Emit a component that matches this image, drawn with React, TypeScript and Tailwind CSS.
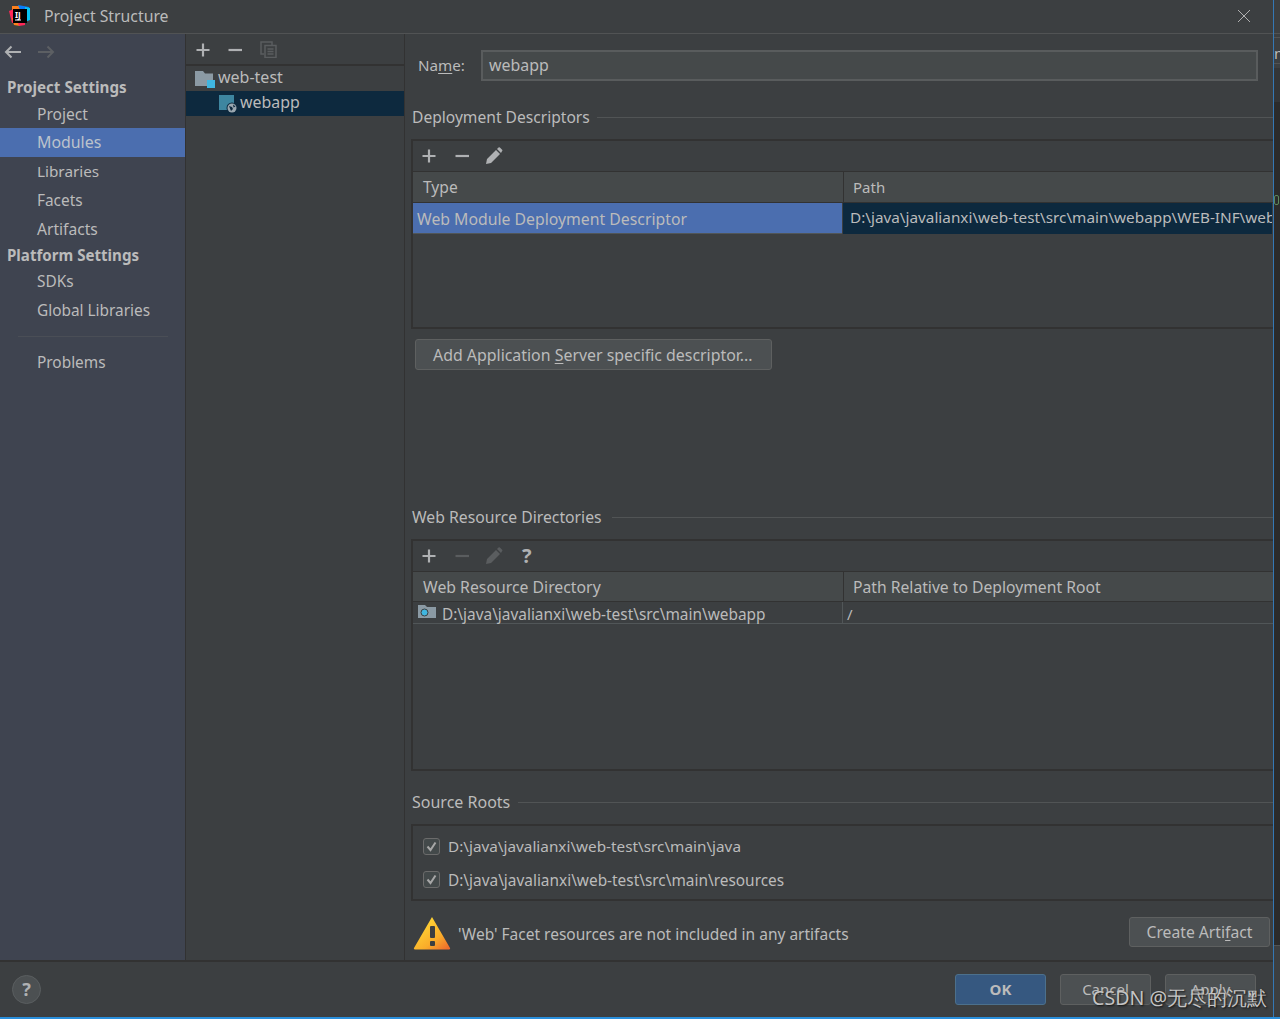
const navItems = [
  { label: 'Project Settings', top: 76, bold: true, size: 'text-[15.2px]' },
  { label: 'Project', top: 103, size: 'text-[15.6px]' },
  { label: 'Modules', top: 131, active: true, size: 'text-[15.9px]' },
  { label: 'Libraries', top: 160, size: 'text-[15.3px]' },
  { label: 'Facets', top: 190, size: 'text-[15.4px]' },
  { label: 'Artifacts', top: 218, size: 'text-[15.6px]' },
  { label: 'Platform Settings', top: 244, bold: true, size: 'text-[15.1px]' },
  { label: 'SDKs', top: 271, size: 'text-[15.4px]' },
  { label: 'Global Libraries', top: 300, size: 'text-[15.4px]' },
  { label: 'Problems', top: 352, size: 'text-[15.4px]' },
]

function Plus({ className = 'stroke-[#afb1b3]' }: { className?: string }) {
  return (
    <svg width="14" height="14" viewBox="0 0 14 14" className={className} fill="none" strokeWidth="2.200">
      <path d="M7 0.500v13M0.500 7h13" />
    </svg>
  )
}

function Minus({ className = 'stroke-[#afb1b3]' }: { className?: string }) {
  return (
    <svg width="14" height="14" viewBox="0 0 14 14" className={className} fill="none" strokeWidth="2.200">
      <path d="M0.500 7h13.500" />
    </svg>
  )
}

function Pencil({ className = 'fill-[#afb1b3]' }: { className?: string }) {
  return (
    <svg width="18" height="18" viewBox="0 0 18 18" className={className}>
      <path d="M1 17l1-5L11 3l4 4-9 9zM12 2l1.500-1.500a1 1 0 0 1 1.400 0l2.200 2.200a1 1 0 0 1 0 1.400L16 6z" />
    </svg>
  )
}

function Section({ title, top, lineFrom, size }: { title: string; top: number; lineFrom: number; size: string }) {
  return (
    <>
      <div className={`absolute left-[412px] leading-5 whitespace-nowrap ${size}`} style={{ top }}>{title}</div>
      <div className="absolute h-px right-[7px] bg-[#515455]" style={{ top: top + 10, left: lineFrom }} />
    </>
  )
}

function HeaderCell({ children, className }: { children: string; className: string }) {
  return <div className={`absolute top-0 h-full flex items-center whitespace-nowrap ${className}`}>{children}</div>
}

function Check({ top }: { top: number }) {
  return (
    <div className="absolute left-[423px] w-[17px] h-[17px] rounded-[3px] border border-[#6b6b6b] bg-[#43494a] flex items-center justify-center" style={{ top }}>
      <svg width="13" height="13" viewBox="0 0 13 13" fill="none" className="stroke-[#a7a7a7]" strokeWidth="2">
        <path d="M2.500 6.500l3 3.500 5-7.500" />
      </svg>
    </div>
  )
}

export default function App() {
  return (
    <div className="relative w-[1280px] h-[1019px] overflow-hidden bg-[#3c3f41] text-[#bbbbbb] font-['Noto_Sans','Open_Sans',sans-serif]">
      {/* title bar */}
      <div className="absolute inset-x-0 top-0 h-[34px] border-b border-[#515354]">
        <svg width="21" height="21" viewBox="0 0 21 21" className="absolute left-[9px] top-[5px]">
          <path d="M3 1l8 0 1 6-9 3z" fill="#fc801d" />
          <path d="M0 6l5-2 3 13-5 1z" fill="#fe2857" />
          <path d="M9 0l11 2 1 9-8-2z" fill="#087cfa" />
          <path d="M3 13l6 0 2 8-6-1z" fill="#fc801d" />
          <path d="M8 15l8 1 0 4-6 1z" fill="#fe2857" />
          <path d="M16 2l5 1 0 12-5 2z" fill="#07c3f2" />
          <rect x="4" y="4" width="14" height="14" fill="#000" />
          <rect x="6" y="14.500" width="6" height="1" fill="#fff" />
        </svg>
        <span className="absolute left-[15px] top-[10px] text-[8px] leading-[9px] font-bold text-white font-['Liberation_Sans',sans-serif]">IJ</span>
        <div className="absolute left-[44px] top-[6px] text-[15.8px] leading-5">Project Structure</div>
        <svg width="14" height="14" viewBox="0 0 14 14" className="absolute left-[1237px] top-[9px] stroke-[#b0b0b0]" fill="none" strokeWidth="1">
          <path d="M1 1l12 12M13 1L1 13" />
        </svg>
      </div>

      {/* sidebar */}
      <div className="absolute left-0 top-[34px] w-[186px] h-[926px] bg-[#3f4450] border-r border-[#323232]" />
      <svg width="18" height="14" viewBox="0 0 18 14" className="absolute left-[4px] top-[45px] stroke-[#afb1b3]" fill="none" strokeWidth="2">
        <path d="M17 7H2M7.500 1.500L2 7l5.500 5.500" />
      </svg>
      <svg width="18" height="14" viewBox="0 0 18 14" className="absolute left-[37px] top-[45px] stroke-[#5c5f63]" fill="none" strokeWidth="2">
        <path d="M1 7h15M10.500 1.500L16 7l-5.500 5.500" />
      </svg>
      <div className="absolute left-0 top-[128px] w-[185px] h-[29px] bg-[#4b6eaf]" />
      {navItems.map((item) => (
        <div
          key={item.label}
          className={`absolute h-[22px] leading-[22px] whitespace-nowrap ${item.size} ${item.bold ? 'left-[7px] font-bold' : 'left-[37px]'} ${item.active ? 'text-[#bcc3cc]' : ''}`}
          style={{ top: item.top }}
        >
          {item.label}
        </div>
      ))}
      <div className="absolute left-[18px] top-[336px] w-[150px] h-px bg-[#4a4e56]" />

      {/* module tree */}
      <div className="absolute left-[186px] top-[64px] w-[218px] h-[2px] bg-[#323232]" />
      <div className="absolute left-[404px] top-[34px] w-px h-[926px] bg-[#323232]" />
      <div className="absolute left-[196px] top-[43px]"><Plus /></div>
      <div className="absolute left-[228px] top-[43px]"><Minus /></div>
      <svg width="17" height="17" viewBox="0 0 17 17" className="absolute left-[260px] top-[41px] stroke-[#5a5d5f]" fill="none" strokeWidth="1.500">
        <path d="M4 13H1V1h11v3" />
        <path d="M5 4.500h11v12H5zM7.500 8h6M7.500 10.500h6M7.500 13h6" />
      </svg>
      <svg width="20" height="18" viewBox="0 0 20 18" className="absolute left-[195px] top-[70px]">
        <path d="M0 1h8l2 2.500h8V16H0z" fill="#8b9aa4" />
        <rect x="12" y="10" width="8" height="8" fill="#40b6e0" />
      </svg>
      <div className="absolute left-[218px] top-[66px] h-[22px] leading-[22px] text-[16px]">web-test</div>
      <div className="absolute left-[186px] top-[91px] w-[218px] h-[25px] bg-[#0d293e]" />
      <svg width="18" height="18" viewBox="0 0 18 18" className="absolute left-[219px] top-[95px]">
        <rect x="0" y="0" width="15" height="15" fill="#3e86a0" />
        <circle cx="13" cy="13" r="5.500" fill="#0d293e" />
        <circle cx="13" cy="13" r="4.500" fill="#9aa7b0" />
        <path d="M10 11l3 1 1 2-2 2zM14 9.500l2.500 2-2 1z" fill="#0d293e" />
      </svg>
      <div className="absolute left-[240px] top-[91px] h-[22px] leading-[22px] text-[15.9px]">webapp</div>

      {/* name */}
      <div className="absolute left-[418px] top-[55px] text-[15.2px] leading-5">
        Na<span className="underline underline-offset-2">m</span>e:
      </div>
      <div className="absolute left-[481px] top-[50px] w-[777px] h-[31px] bg-[#45494a] border-2 border-[#595c5d] pl-[6px] text-[15.9px] leading-[26px]">webapp</div>

      {/* deployment descriptors */}
      <Section title="Deployment Descriptors" top={107} lineFrom={597} size="text-[15.6px]" />
      <div className="absolute left-[411px] top-[139px] right-[6px] h-[190px] border-2 border-r-0 border-[#323232]">
        <div className="absolute left-[9px] top-[8px]"><Plus /></div>
        <div className="absolute left-[42px] top-[8px]"><Minus /></div>
        <div className="absolute left-[72px] top-[6px]"><Pencil /></div>
        <div className="absolute left-0 right-0 top-[30px] h-[32px] bg-[#45494a] border-y border-[#323232]">
          <HeaderCell className="left-0 pl-2.5 text-[15.6px] pt-[2px]">Type</HeaderCell>
          <HeaderCell className="left-[430px] pl-[9px] border-l border-[#323232] text-[15px]">Path</HeaderCell>
        </div>
        <div className="absolute left-0 top-[62px] w-[429px] h-[31px] bg-[#4b6eaf] pl-1 text-[15.8px] leading-[32px] whitespace-nowrap border-b border-[#515658]">Web Module Deployment Descriptor</div>
        <div className="absolute left-[430px] top-[62px] right-[2px] h-[31px] bg-[#0d293e] pl-[7px] text-[15.3px] leading-[29px] overflow-hidden whitespace-nowrap">D:\java\javalianxi\web-test\src\main\webapp\WEB-INF\web.xml</div>
      </div>
      <div className="absolute left-[415px] top-[339px] w-[357px] h-[31px] rounded-[3px] border border-[#5e6060] bg-[#4c5052] pl-[17px] text-[15.9px] leading-[31px] whitespace-nowrap">
        Add Application <span className="underline underline-offset-2">S</span>erver specific descriptor...
      </div>

      {/* web resource directories */}
      <Section title="Web Resource Directories" top={507} lineFrom={612} size="text-[15.75px]" />
      <div className="absolute left-[411px] top-[539px] right-[6px] h-[232px] border-2 border-r-0 border-[#323232]">
        <div className="absolute left-[9px] top-[8px]"><Plus /></div>
        <div className="absolute left-[42px] top-[8px]"><Minus className="stroke-[#5a5d5f]" /></div>
        <div className="absolute left-[72px] top-[6px]"><Pencil className="fill-[#5a5d5f]" /></div>
        <div className="absolute left-[109px] top-[3px] text-[20px] leading-6 font-bold text-[#afb1b3]">?</div>
        <div className="absolute left-0 right-0 top-[30px] h-[31px] bg-[#45494a] border-y border-[#323232]">
          <HeaderCell className="left-0 pl-2.5 text-[15.8px] pt-[2px]">Web Resource Directory</HeaderCell>
          <HeaderCell className="left-[430px] pl-[9px] border-l border-[#323232] text-[15.7px] pt-[2px]">Path Relative to Deployment Root</HeaderCell>
        </div>
        <div className="absolute left-0 right-0 top-[61px] h-[22px] border-b border-[#515658]">
          <svg width="18" height="14" viewBox="0 0 18 14" className="absolute left-[5px] top-[2px]">
            <path d="M0 1h7l2 2h9v11H0z" fill="#8b9aa4" />
            <circle cx="6.500" cy="8.500" r="3.500" fill="#40b6e0" stroke="#3c3f41" />
          </svg>
          <div className="absolute left-[29px] top-[1px] text-[15.4px] leading-[24px] whitespace-nowrap">D:\java\javalianxi\web-test\src\main\webapp</div>
          <div className="absolute left-[429px] top-0 h-full pl-1 border-l border-[#515658] text-[15px] leading-[24px]">/</div>
        </div>
      </div>

      {/* source roots */}
      <Section title="Source Roots" top={792} lineFrom={518} size="text-[16px]" />
      <div className="absolute left-[411px] top-[824px] right-[6px] h-[77px] border-2 border-r-0 border-[#323232]" />
      <Check top={838} />
      <div className="absolute left-[448px] top-[836px] text-[15.3px] leading-5 whitespace-nowrap">D:\java\javalianxi\web-test\src\main\java</div>
      <Check top={871} />
      <div className="absolute left-[448px] top-[871px] text-[15.4px] leading-5 whitespace-nowrap">D:\java\javalianxi\web-test\src\main\resources</div>

      {/* warning */}
      <svg width="38" height="34" viewBox="0 0 38 34" className="absolute left-[413px] top-[916px]">
        <defs>
          <linearGradient id="warn" x1="0.200" y1="0.200" x2="0.900" y2="1">
            <stop offset="0" stopColor="#ffd535" />
            <stop offset="0.600" stopColor="#f9ac2a" />
            <stop offset="1" stopColor="#ef6c2c" />
          </linearGradient>
        </defs>
        <path d="M19 1L37 32a1 1 0 0 1-1 1.500H2A1 1 0 0 1 1 32z" fill="url(#warn)" />
        <rect x="17" y="10" width="5" height="12" rx="1" fill="#3c3f41" />
        <rect x="17" y="25" width="5" height="5" rx="1" fill="#3c3f41" />
      </svg>
      <div className="absolute left-[458px] top-[924px] text-[15.5px] leading-5 whitespace-nowrap">'Web' Facet resources are not included in any artifacts</div>
      <div className="absolute left-[1129px] top-[917px] w-[141px] h-[30px] rounded-[3px] border border-[#5e6060] bg-[#4c5052] text-center text-[15.7px] leading-[28px] whitespace-nowrap">
        Create Arti<span className="underline underline-offset-2">f</span>act
      </div>

      {/* bottom bar */}
      <div className="absolute left-0 right-[7px] top-[960px] h-[2px] bg-[#323232]" />
      <div className="absolute left-[12px] top-[975px] w-[29px] h-[29px] rounded-full bg-[#4c5052] border border-[#5a5e60] flex items-center justify-center text-[18px] font-bold text-[#afb1b3]">?</div>
      <div className="absolute left-[955px] top-[974px] w-[91px] h-[31px] rounded-[3px] border border-[#4c708c] bg-[#365880] text-center text-[15px] font-bold leading-[29px]">OK</div>
      <div className="absolute left-[1060px] top-[974px] w-[91px] h-[31px] rounded-[3px] border border-[#5e6060] bg-[#4c5052] text-center text-[15px] leading-[29px]">Cancel</div>
      <div className="absolute left-[1165px] top-[974px] w-[91px] h-[31px] rounded-[3px] border border-[#5e6060] bg-[#4c5052] text-center text-[15px] leading-[29px]">Apply</div>

      {/* window edge and what shows behind it */}
      <div className="absolute left-[1274px] top-0 w-[6px] h-[1019px] bg-[#2b2b2b]" />
      <div className="absolute left-[1274px] top-0 w-[6px] h-[68px] bg-[#3c3f41] border-t-0" />
      <div className="absolute left-[1274px] top-[33px] w-[6px] h-px bg-[#515354]" />
      <div className="absolute left-[1274px] top-[37px] w-[6px] h-px bg-[#515354]" />
      <div className="absolute left-[1274px] top-[63px] w-[6px] h-px bg-[#515354]" />
      <div className="absolute left-[1274px] top-[68px] w-[6px] h-[34px] bg-[#333537]" />
      <div className="absolute left-[1274px] top-[945px] w-[6px] h-[74px] bg-[#3c3f41] border-t border-[#515354]" />
      <div className="absolute left-[1274px] top-[44px] w-[6px] h-[18px] overflow-hidden text-[15px] leading-[18px]">n</div>
      <div className="absolute left-[1274px] top-[195px] w-[5px] h-[10px] rounded-[2px] border border-[#5c8a5c]" />
      <div className="absolute left-[1273px] top-0 w-px h-[1019px] bg-[#3478b5]" />
      <div className="absolute inset-x-0 bottom-0 h-[2px] bg-[#2a8fdc]" />

      {/* watermark */}
      <div className="absolute left-[1092px] top-[984px] text-[19.6px] leading-7 whitespace-nowrap text-[#c4c4c4] [text-shadow:1px_1px_2px_#111] font-['Liberation_Sans','Noto_Sans_CJK_SC',sans-serif]">CSDN @无尽的沉默</div>
    </div>
  )
}
